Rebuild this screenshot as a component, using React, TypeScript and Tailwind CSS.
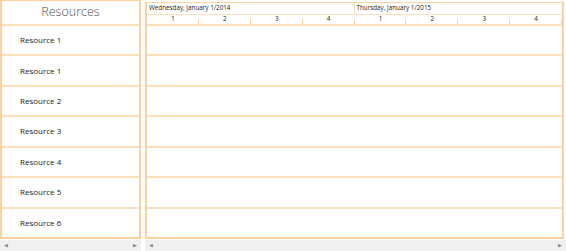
import React from "react";

const resources = [
  "Resource 1",
  "Resource 1",
  "Resource 2",
  "Resource 3",
  "Resource 4",
  "Resource 5",
  "Resource 6",
];

const dates = ["Wednesday, January 1/2014", "Thursday, January 1/2015"];
const slots = [1, 2, 3, 4, 1, 2, 3, 4];

function ScrollBar() {
  return (
    <div className="flex h-[11px] items-center justify-between bg-[#f0f0f0] px-[4px] text-[5px] leading-none text-[#8a8a8a]">
      <span>◀</span>
      <span>▶</span>
    </div>
  );
}

export default function App() {
  return (
    <div className="flex h-[251px] w-[566px] bg-white font-['Open_Sans',sans-serif] text-[#222]">
      <div className="flex w-[141px] flex-col">
        <div className="flex flex-1 flex-col border-x-2 border-t border-b-2 border-[#fcd29c]">
          <div className="flex h-[25px] items-center justify-center border-b-2 border-[#fde0bb] text-[12.5px] font-light text-[#555]">
            Resources
          </div>
          {resources.map((name, i) => (
            <div
              key={i}
              className={
                "flex flex-1 items-center pl-[18px] text-[8px] " +
                (i < resources.length - 1 ? "border-b-2 border-[#fde0bb]" : "")
              }
            >
              {name}
            </div>
          ))}
        </div>
        <div className="h-[1px]" />
        <ScrollBar />
      </div>

      <div className="w-[4px]" />

      <div className="flex flex-1 flex-col">
        <div className="mr-[2px] mt-[2px] flex flex-1 flex-col border-x-2 border-t border-b-2 border-[#fcd29c]">
          <div className="flex h-[12px] border-b border-[#fde0bb]">
            {dates.map((d, i) => (
              <div
                key={d}
                className={
                  "flex w-1/2 items-center pl-[2px] text-[6.3px] leading-none " +
                  (i === 0 ? "border-r border-[#fde0bb]" : "")
                }
              >
                {d}
              </div>
            ))}
          </div>
          <div className="grid h-[11px] grid-cols-8 border-b-2 border-[#fde0bb]">
            {slots.map((s, i) => (
              <div
                key={i}
                className="relative flex items-center justify-center text-[6.3px] leading-none after:absolute after:bottom-0 after:right-0 after:h-[5px] after:w-[1px] after:bg-[#fcd29c]"
              >
                {s}
              </div>
            ))}
          </div>
          {resources.map((_, i) => (
            <div
              key={i}
              className={
                "flex-1 " + (i < resources.length - 1 ? "border-b-2 border-[#fde0bb]" : "")
              }
            />
          ))}
        </div>
        <div className="h-[1px]" />
        <ScrollBar />
      </div>
    </div>
  );
}
